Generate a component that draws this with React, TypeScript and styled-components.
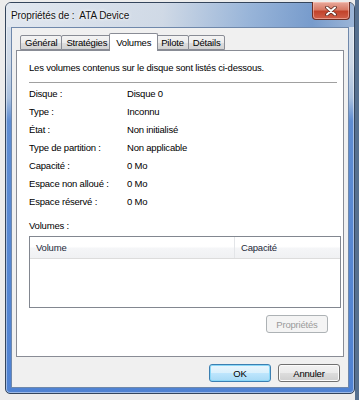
import { FC, Fragment } from "react"
import styled, { createGlobalStyle } from "styled-components"

const GlobalStyle = createGlobalStyle`
  html,
  body {
    margin: 0;
    padding: 0;
    width: 359px;
    height: 400px;
    overflow: hidden;
    background: linear-gradient(to right, #ececec 355px, #56708f 355px);
    font-family: "Liberation Sans", Arial, sans-serif;
  }
`

const tabs = ["Général", "Stratégies", "Volumes", "Pilote", "Détails"]

const infos: [string, string][] = [
  ["Disque :", "Disque 0"],
  ["Type :", "Inconnu"],
  ["État :", "Non initialisé"],
  ["Type de partition :", "Non applicable"],
  ["Capacité :", "0 Mo"],
  ["Espace non alloué :", "0 Mo"],
  ["Espace réservé :", "0 Mo"],
]

const CloseIcon: FC = () => (
  <svg width="12" height="10" viewBox="0 0 12 10">
    <path d="M2 1.5 L10 8.5 M10 1.5 L2 8.5" stroke="#5a2a22" strokeWidth="3.6" strokeLinecap="round" />
    <path d="M2 1.5 L10 8.5 M10 1.5 L2 8.5" stroke="#ffffff" strokeWidth="2" strokeLinecap="round" />
  </svg>
)

export default function App() {
  return (
    <>
      <GlobalStyle />
      <Page>
        <Window>
          <TitleBar>
            <Title>Propriétés de :&nbsp; ATA Device</Title>
            <CloseButton>
              <CloseIcon />
            </CloseButton>
          </TitleBar>
          <Client>
            <TabRow>
              {tabs.map((t) => (
                <Tab key={t} $active={t === "Volumes"}>
                  {t}
                </Tab>
              ))}
            </TabRow>
            <Panel>
              <Text>Les volumes contenus sur le disque sont listés ci-dessous.</Text>
              <Separator />
              <InfoGrid>
                {infos.map(([label, value]) => (
                  <Fragment key={label}>
                    <Text>{label}</Text>
                    <Text>{value}</Text>
                  </Fragment>
                ))}
              </InfoGrid>
              <VolumesLabel>Volumes :</VolumesLabel>
              <ListView>
                <ListHeader>
                  <HeaderCell $width={205}>Volume</HeaderCell>
                  <HeaderCell>Capacité</HeaderCell>
                </ListHeader>
              </ListView>
              <PanelButtons>
                <Button disabled>Propriétés</Button>
              </PanelButtons>
            </Panel>
            <Footer>
              <Button $primary>OK</Button>
              <Button>Annuler</Button>
            </Footer>
          </Client>
        </Window>
      </Page>
    </>
  )
}

const Page = styled.div`
  padding: 2px 0 0 5px;
`

const Window = styled.div`
  box-sizing: border-box;
  width: 350px;
  height: 392px;
  display: flex;
  flex-direction: column;
  border: 1px solid #34455c;
  border-radius: 6px 6px 5px 5px;
  background: linear-gradient(
    to bottom,
    #dce4ee 0,
    #cdd8e6 60px,
    #a9c0de 95px,
    #5f8dd2 118px,
    #4f82d2 100%
  );
  box-shadow: inset 0 0 0 1px rgba(255, 255, 255, 0.45);
`

const TitleBar = styled.div`
  height: 24px;
  display: flex;
  align-items: center;
  padding-left: 5px;
  border-radius: 5px 5px 0 0;
  background: linear-gradient(
    to right,
    rgba(226, 232, 240, 0.9) 0,
    rgba(205, 215, 228, 0.8) 45%,
    rgba(130, 165, 210, 0.75) 70%,
    rgba(95, 138, 196, 0.8) 88%,
    rgba(140, 170, 210, 0.8) 100%
  );
`

const Title = styled.div`
  font-size: 10px;
  color: #111;
  text-shadow: 0 0 4px #fff, 0 0 2px #fff;
  letter-spacing: -0.1px;
`

const CloseButton = styled.div`
  margin-left: auto;
  margin-right: 4px;
  align-self: flex-start;
  margin-top: -1px;
  width: 38px;
  height: 18px;
  box-sizing: border-box;
  display: flex;
  align-items: center;
  justify-content: center;
  border: 1px solid #6e2e24;
  border-top: none;
  border-radius: 0 0 4px 4px;
  background: linear-gradient(to bottom, #e8a99c 0, #d87a66 45%, #c2432b 55%, #d0604a 100%);
  box-shadow: inset 0 0 0 1px rgba(255, 210, 200, 0.5);
`

const Client = styled.div`
  flex: 1;
  margin: 0 5px 5px 5px;
  display: flex;
  flex-direction: column;
  border: 1px solid #6f88ab;
  background: #f0f0f0;
  padding: 5px 4px 0 4px;
`

const TabRow = styled.div`
  height: 17px;
  display: flex;
  align-items: flex-end;
  padding-left: 4px;
`

const Tab = styled.div<{ $active?: boolean }>`
  position: relative;
  box-sizing: border-box;
  height: ${(p) => (p.$active ? "18px" : "15px")};
  padding: 0 ${(p) => (p.$active ? "6px" : "4px")};
  margin: 0 ${(p) => (p.$active ? "-2px" : "0")};
  margin-bottom: ${(p) => (p.$active ? "-1px" : "0")};
  z-index: ${(p) => (p.$active ? 2 : 1)};
  margin-right: ${(p) => (p.$active ? "-2px" : "-1px")};
  display: flex;
  align-items: center;
  font-size: 9.5px;
  letter-spacing: -0.2px;
  color: #000;
  border: 1px solid #898c95;
  border-bottom: ${(p) => (p.$active ? "none" : "1px solid #898c95")};
  border-radius: 2px 2px 0 0;
  background: ${(p) =>
    p.$active
      ? "#ffffff"
      : "linear-gradient(to bottom, #f4f4f4 0, #ececec 50%, #dedede 51%, #d2d2d2 100%)"};
`

const Panel = styled.div`
  box-sizing: border-box;
  height: 307px;
  display: flex;
  flex-direction: column;
  background: #ffffff;
  border: 1px solid #898c95;
  padding: 8px 2px 0 12px;
`

const Text = styled.div`
  font-size: 9.5px;
  letter-spacing: -0.2px;
  line-height: 18px;
  color: #000;
  white-space: nowrap;
`

const Separator = styled.div`
  height: 1px;
  margin: 5px 4px 0 0;
  background: #a0a0a0;
`

const InfoGrid = styled.div`
  margin-top: 2px;
  display: grid;
  grid-template-columns: 98px 1fr;
  grid-auto-rows: 18px;
`

const VolumesLabel = styled(Text)`
  margin-top: 6px;
`

const ListView = styled.div`
  box-sizing: border-box;
  margin-top: 1px;
  height: 72px;
  border: 1px solid #828790;
  background: #fff;
`

const ListHeader = styled.div`
  display: flex;
  height: 21px;
  border-bottom: 1px solid #dcdcdc;
  background: linear-gradient(to bottom, #ffffff 0, #ffffff 45%, #f4f5f7 55%, #f0f1f3 100%);
`

const HeaderCell = styled.div<{ $width?: number }>`
  box-sizing: border-box;
  width: ${(p) => (p.$width ? `${p.$width}px` : "auto")};
  flex: ${(p) => (p.$width ? "none" : "1")};
  padding-left: 6px;
  display: flex;
  align-items: center;
  font-size: 9.5px;
  letter-spacing: -0.2px;
  color: #1e2a3a;
  border-right: ${(p) => (p.$width ? "1px solid #e3e5e8" : "none")};
`

const PanelButtons = styled.div`
  display: flex;
  justify-content: flex-end;
  margin-top: 7px;
  padding-right: 13px;
`

const Footer = styled.div`
  display: flex;
  justify-content: flex-end;
  gap: 7px;
  padding: 7px 4px 0 0;
`

const Button = styled.button<{ $primary?: boolean }>`
  box-sizing: border-box;
  width: 62px;
  height: 18px;
  padding: 0;
  font-family: "Liberation Sans", Arial, sans-serif;
  font-size: 9.5px;
  letter-spacing: -0.2px;
  color: #000;
  border-radius: 3px;
  border: 1px solid ${(p) => (p.$primary ? "#3c7fb1" : "#707070")};
  background: ${(p) =>
    p.$primary
      ? "linear-gradient(to bottom, #eaf6fd 0, #d9f0fc 50%, #bee6fd 51%, #a7d9f5 100%)"
      : "linear-gradient(to bottom, #f2f2f2 0, #ebebeb 50%, #dddddd 51%, #cfcfcf 100%)"};
  box-shadow: ${(p) => (p.$primary ? "inset 0 0 0 1px #8ad8f8" : "inset 0 0 0 1px #fcfcfc")};

  &:disabled {
    color: #9a9a9a;
    border-color: #adb2b5;
    background: #f4f4f4;
    box-shadow: none;
  }
`
